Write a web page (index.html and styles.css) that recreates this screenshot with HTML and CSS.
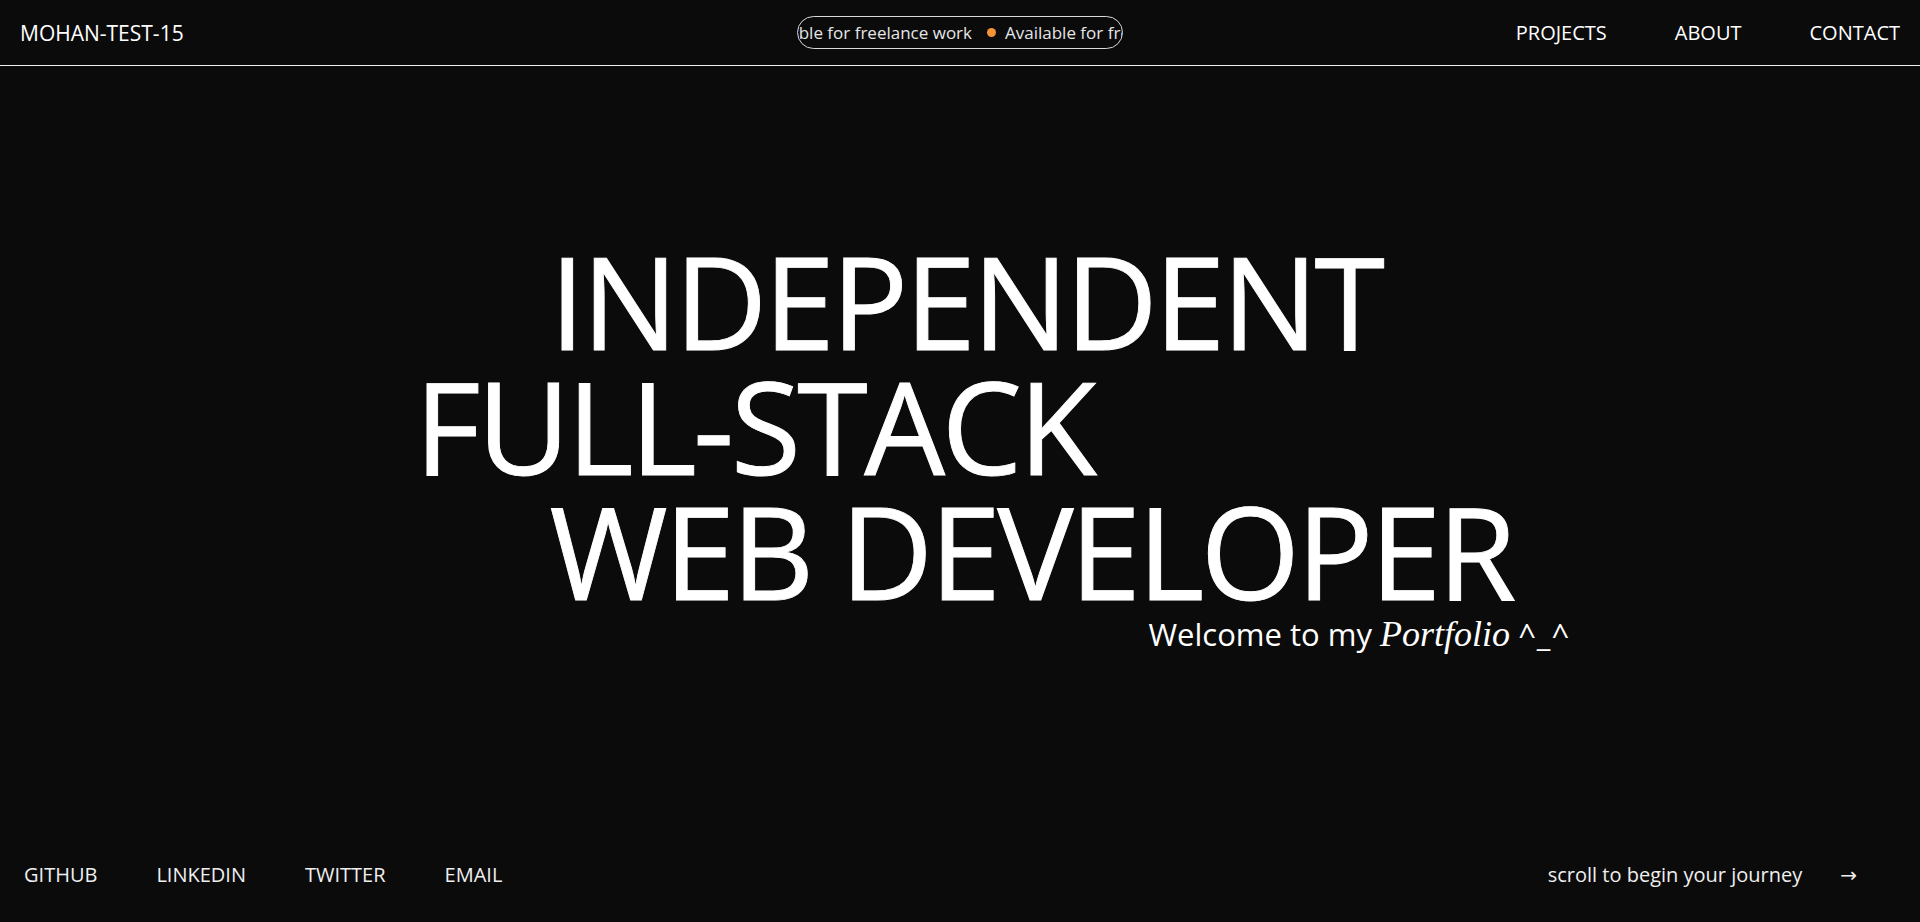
FILE: index.html
```html
<!DOCTYPE html>
<html lang="en">
<head>
<meta charset="utf-8">
<title>Mohan - Portfolio</title>
<link rel="stylesheet" href="styles.css">
</head>
<body>
<div class="page">
  <header class="topbar">
    <a class="logo" href="#">MOHAN-TEST-15</a>
    <div class="status">
      <div class="status-track">
        <span class="status-item">Available for freelance work</span><span class="dot"></span>
        <span class="status-item">Available for freelance work</span><span class="dot"></span>
        <span class="status-item">Available for freelance work</span><span class="dot"></span>
      </div>
    </div>
    <nav class="nav">
      <a href="#">PROJECTS</a>
      <a href="#">ABOUT</a>
      <a href="#">CONTACT</a>
    </nav>
  </header>

  <main class="hero">
    <div class="hero-inner">
      <h1 class="title">
        <span class="line indent">INDEPENDENT</span>
        <span class="line">FULL-STACK</span>
        <span class="line indent">WEB DEVELOPER</span>
      </h1>
      <p class="welcome">Welcome to my <em>Portfolio</em> <span class="face">^_^</span></p>
    </div>
  </main>

  <footer class="bottombar">
    <nav class="socials">
      <a href="#">GITHUB</a>
      <a href="#">LINKEDIN</a>
      <a href="#">TWITTER</a>
      <a href="#">EMAIL</a>
    </nav>
    <div class="scroll-hint">
      <span>scroll to begin your journey</span>
      <span class="arrow">&rarr;</span>
    </div>
  </footer>
</div>
</body>
</html>
```

FILE: styles.css
```css
* { box-sizing: border-box; }

html, body {
  margin: 0;
  padding: 0;
  background: #0b0b0b;
  color: #ffffff;
  font-family: "Open Sans", "Noto Sans", "DejaVu Sans", sans-serif;
}

a { color: inherit; text-decoration: none; }

.page {
  height: 100vh;
  display: flex;
  flex-direction: column;
  overflow: hidden;
}

/* Header */
.topbar {
  height: 66px;
  flex: 0 0 66px;
  border-bottom: 1px solid #f2f2f2;
  display: grid;
  grid-template-columns: 1fr auto 1fr;
  align-items: center;
  padding: 0 20px;
}

.logo {
  font-size: 21px;
  justify-self: start;
}

.status {
  width: 326px;
  height: 33px;
  border: 1px solid #d9d9d9;
  border-radius: 999px;
  overflow: hidden;
  display: flex;
  align-items: center;
}

.status-track {
  display: flex;
  align-items: center;
  white-space: nowrap;
  transform: translateX(-46px);
  font-size: 17px;
  color: #e6e6e6;
}

.dot {
  width: 9px;
  height: 9px;
  border-radius: 50%;
  background: #f39237;
  margin: 0 9px 0 15px;
  flex: 0 0 9px;
}

.nav {
  justify-self: end;
  display: flex;
  gap: 68px;
  font-size: 20px;
}

/* Hero */
.hero {
  flex: 1;
  display: flex;
  flex-direction: column;
  justify-content: center;
  align-items: center;
}

.hero-inner {
  width: 1091px;
}

.title {
  margin: 0;
  font-size: 128px;
  font-weight: 400;
  line-height: 125px;
  letter-spacing: -3.6px;
  -webkit-text-stroke: 0.9px #ffffff;
}

.line {
  display: block;
  white-space: nowrap;
}

.indent { padding-left: 135px; }

.welcome {
  margin: 0 0 0 734px;
  font-size: 31px;
  white-space: nowrap;
}

.welcome em {
  font-family: "Liberation Serif", "Times New Roman", serif;
  font-style: italic;
  font-size: 36px;
}

.face { letter-spacing: 1px; }

/* Footer */
.bottombar {
  height: 96px;
  flex: 0 0 96px;
  display: flex;
  align-items: center;
  justify-content: space-between;
  padding: 0 63px 0 24px;
  font-size: 20px;
  color: #efefef;
}

.socials {
  display: flex;
  gap: 59px;
}

.scroll-hint {
  display: flex;
  align-items: center;
  gap: 38px;
}

.arrow { font-size: 20px; }
```
